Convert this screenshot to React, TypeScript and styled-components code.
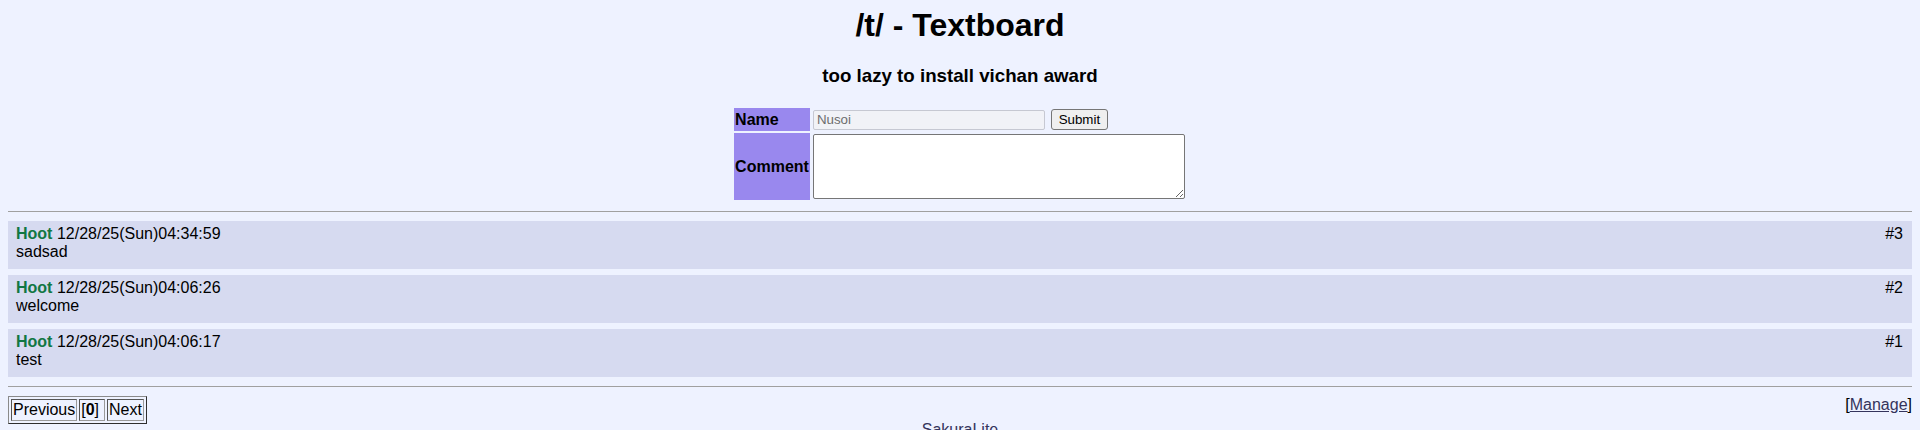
import React, { FC } from "react";
import styled, { createGlobalStyle } from "styled-components";

const GlobalStyle = createGlobalStyle`
  body {
    margin: 0;
    background-color: #eef2ff;
    color: #000;
    font-family: "Liberation Sans", Arial, sans-serif;
    font-size: 16px;
  }
`;

interface IPost {
  no: number;
  name: string;
  date: string;
  message: string;
}

const posts: IPost[] = [
  { no: 3, name: "Hoot", date: "12/28/25(Sun)04:34:59", message: "sadsad" },
  { no: 2, name: "Hoot", date: "12/28/25(Sun)04:06:26", message: "welcome" },
  { no: 1, name: "Hoot", date: "12/28/25(Sun)04:06:17", message: "test" },
];

export const App: FC = () => {
  return (
    <Page>
      <GlobalStyle />
      <Title>/t/ - Textboard</Title>
      <Subtitle>too lazy to install vichan award</Subtitle>

      <PostForm>
        <tbody>
          <tr>
            <Label>Name</Label>
            <Field>
              <NameRow>
                <NameInput type="text" placeholder="Nusoi" />
                <SubmitButton type="button">Submit</SubmitButton>
              </NameRow>
            </Field>
          </tr>
          <tr>
            <Label>Comment</Label>
            <Field>
              <CommentBox />
            </Field>
          </tr>
        </tbody>
      </PostForm>

      <Rule />

      <PostList>
        {posts.map((post) => (
          <Post key={post.no}>
            <PostHead>
              <span>
                <PosterName>{post.name}</PosterName> {post.date}
              </span>
              <span>#{post.no}</span>
            </PostHead>
            <div>{post.message}</div>
          </Post>
        ))}
      </PostList>

      <Rule />

      <NavRow>
        <Pager>
          <tbody>
            <tr>
              <PagerCell>Previous</PagerCell>
              <PagerCell $extra>
                [<b>0</b>]
              </PagerCell>
              <PagerCell>Next</PagerCell>
            </tr>
          </tbody>
        </Pager>
        <ManageLink>
          [<a href="#">Manage</a>]
        </ManageLink>
      </NavRow>

      <Footer>
        <a href="#">SakuraLite</a>
      </Footer>
    </Page>
  );
};

export default App;

const Page = styled.div`
  padding: 0 8px;
`;

const Title = styled.h1`
  margin: 7px 0 0;
  font-size: 32px;
  line-height: 36px;
  font-weight: bold;
  text-align: center;
`;

const Subtitle = styled.h3`
  margin: 21.5px 0 0;
  font-size: 18.72px;
  line-height: 22px;
  font-weight: bold;
  text-align: center;
`;

const PostForm = styled.table`
  margin: 19.5px auto 0;
  border-collapse: separate;
  border-spacing: 2px;
`;

const Label = styled.td`
  background-color: #9988ee;
  font-weight: bold;
  padding: 1px;
  text-align: left;
  vertical-align: middle;
  line-height: 18px;
`;

const Field = styled.td`
  padding: 1px;
  vertical-align: middle;
`;

const NameRow = styled.div`
  display: flex;
  align-items: center;
  gap: 6px;
`;

const NameInput = styled.input`
  box-sizing: border-box;
  width: 232px;
  height: 20px;
  margin: 0;
  padding: 1px 3px;
  background-color: #f1f2f7;
  border: 1px solid #c6c8d2;
  border-radius: 2px;
  font-family: "Liberation Sans", Arial, sans-serif;
  font-size: 13.33px;
  color: #555;

  &::placeholder {
    color: #6d6d6d;
  }
`;

const SubmitButton = styled.button`
  box-sizing: border-box;
  width: 57px;
  height: 21px;
  margin: 0;
  padding: 0 6px;
  background-color: #efefef;
  border: 1px solid #767676;
  border-radius: 3px;
  font-family: "Liberation Sans", Arial, sans-serif;
  font-size: 13.33px;
  color: #000;
`;

const CommentBox = styled.textarea`
  display: block;
  box-sizing: border-box;
  width: 372px;
  height: 65px;
  margin: 0;
  background-color: #fff;
  border: 1px solid #767676;
  border-radius: 2px;
`;

const Rule = styled.hr`
  height: 0;
  margin: 9px 0;
  border: 0;
  border-top: 1px solid #a0a0a0;
`;

const PostList = styled.div`
  display: flex;
  flex-direction: column;
  gap: 6px;
`;

const Post = styled.div`
  background-color: #d6daf0;
  padding: 4px 9px 8px 8px;
  line-height: 18px;
`;

const PostHead = styled.div`
  display: flex;
  justify-content: space-between;
`;

const PosterName = styled.b`
  color: #117743;
`;

const NavRow = styled.div`
  display: flex;
  justify-content: space-between;
  align-items: flex-start;
`;

const Pager = styled.table`
  border-collapse: separate;
  border-spacing: 2px;
  border: 1px solid;
  border-color: #8a8a8a #2e2e2e #2e2e2e #8a8a8a;
`;

const PagerCell = styled.td<{ $extra?: boolean }>`
  padding: ${(p) => (p.$extra ? "1px 5px 1px 1px" : "1px")};
  line-height: 18px;
  border: 1px solid;
  border-color: #555 #9a9a9a #9a9a9a #555;
`;

const ManageLink = styled.div`
  line-height: 18px;

  a {
    color: #34345c;
    text-decoration: underline;
  }
`;

const Footer = styled.div`
  margin-top: -3px;
  text-align: center;
  line-height: 18px;

  a {
    color: #34345c;
    text-decoration: none;
  }
`;
